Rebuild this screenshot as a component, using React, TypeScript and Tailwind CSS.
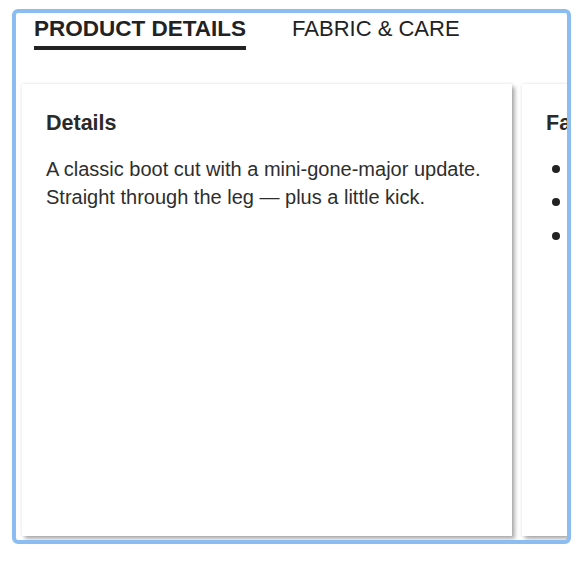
import React from "react";

export default function App() {
  return (
    <div className="w-[580px] h-[580px] bg-white font-['Liberation_Sans',Arial,sans-serif] pt-[9px] pl-[12px]">
      <div className="w-[559px] h-[535px] border-4 border-[#8bbcf2] rounded-[6px] overflow-hidden flex flex-col">
        <div className="flex gap-[46px] pl-[18px] pt-[3px] shrink-0">
          <div className="text-[22.5px] leading-[26px] font-bold text-[#222] pb-[4px] border-b-4 border-[#222]">
            PRODUCT DETAILS
          </div>
          <div className="text-[22px] leading-[26px] text-[#222]">FABRIC &amp; CARE</div>
        </div>
        <div className="flex gap-[10px] pl-[6px] pt-[34px] pb-[4px] flex-1 min-h-0">
          <div className="w-[490px] shrink-0 bg-white px-[24px] pt-[27px] shadow-[0_0_3px_rgba(0,0,0,0.12),3px_3px_4px_rgba(0,0,0,0.3)]">
            <h2 className="text-[21.5px] leading-[24px] font-bold text-[#2a2a2a]">Details</h2>
            <p className="mt-[20px] text-[20px] leading-[28px] text-[#2e2e2e]">
              A classic boot cut with a mini-gone-major update. Straight through the leg — plus a little kick.
            </p>
          </div>
          <div className="w-[490px] shrink-0 bg-white px-[24px] pt-[27px] shadow-[0_0_3px_rgba(0,0,0,0.12),3px_3px_4px_rgba(0,0,0,0.3)]">
            <h2 className="text-[21.5px] leading-[24px] font-bold text-[#2a2a2a] whitespace-nowrap">Fa</h2>
            <ul className="mt-[17px] flex flex-col">
              {["", "", ""].map((t, i) => (
                <li key={i} className="flex items-center h-[33.5px] pl-[6px] gap-[14px] text-[20px] text-[#333] whitespace-nowrap">
                  <span className="w-[8px] h-[8px] rounded-full bg-[#222] shrink-0" />
                  <span>{t}</span>
                </li>
              ))}
            </ul>
          </div>
        </div>
      </div>
    </div>
  );
}
